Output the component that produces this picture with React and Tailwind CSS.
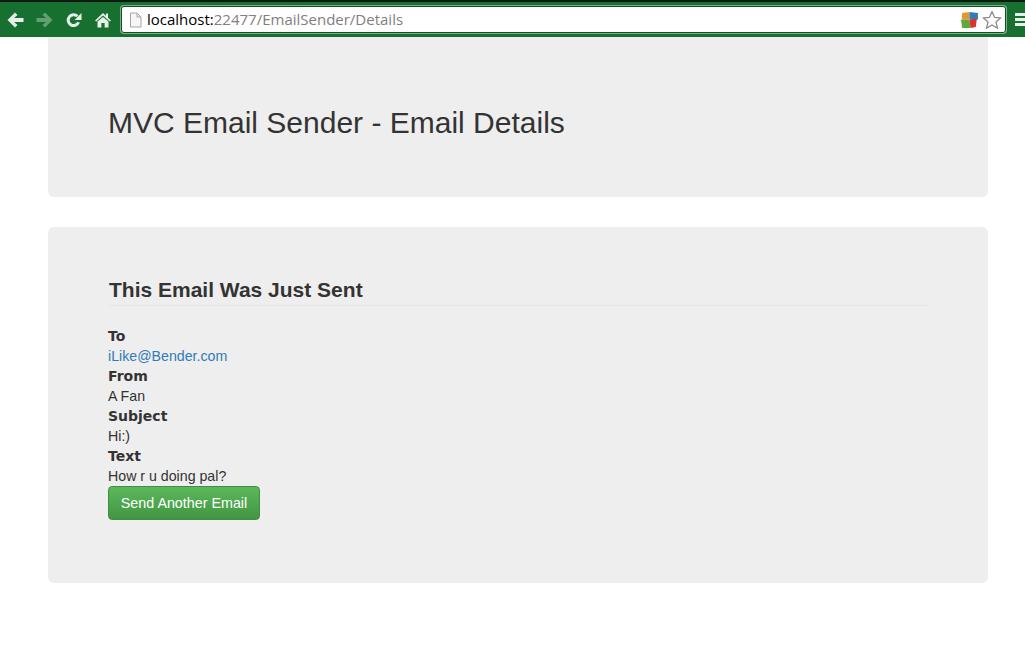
import React from 'react';

function BackArrow({ color, flip }) {
  return (
    <svg width="17" height="16" viewBox="0 0 17 16" className={flip ? 'shrink-0 -scale-x-100' : 'shrink-0'}>
      <path d="M8 0.5 L10.5 3 L7 6 H16.5 V10 H7 L10.5 13 L8 15.5 L0.5 8 Z" fill={color} />
    </svg>
  );
}

function ReloadIcon() {
  return (
    <svg width="16" height="16" viewBox="0 0 16 16" className="shrink-0">
      <path d="M12.6 10.2 A5.4 5.4 0 1 1 11.4 4.3" fill="none" stroke="#e6efe8" strokeWidth="3" />
      <path d="M15.5 1 V8 H8.5 Z" fill="#e6efe8" />
    </svg>
  );
}

function HomeIcon() {
  return (
    <svg width="16" height="16" viewBox="0 0 16 16" className="shrink-0">
      <path d="M8 1 L11 3.8 V1.5 H13 V5.7 L16 8.5 L14.8 9.5 L8 3.6 L1.2 9.5 L0 8.5 Z" fill="#e6efe8" />
      <path d="M8 5 L13.5 9.6 V15.5 H9.6 V11 H6.4 V15.5 H2.5 V9.6 Z" fill="#e6efe8" />
    </svg>
  );
}

function AvgLogo() {
  return (
    <svg width="18" height="18" viewBox="0 0 17 17" className="shrink-0">
      <path d="M1 2 L8 1 L8 8 L1 8 Z" fill="#e8952a" />
      <path d="M8 1 L16 2 L16 8 L8 8 Z" fill="#2b7fc0" />
      <path d="M0 8 L8 8 L9 16 L1 16 Z" fill="#62a83e" />
      <path d="M8 8 L15 7 L14 15 L9 16 Z" fill="#d8352a" />
    </svg>
  );
}

function StarIcon() {
  return (
    <svg width="20" height="20" viewBox="0 0 20 20" className="shrink-0">
      <path d="M10 1.5 L12.5 7.3 L18.8 7.8 L14 12 L15.5 18.3 L10 15 L4.5 18.3 L6 12 L1.2 7.8 L7.5 7.3 Z" fill="#fff" stroke="#8a8a8a" strokeWidth="1.3" strokeLinejoin="round" />
    </svg>
  );
}

function BrowserBar() {
  return (
    <div className="h-[37px] bg-[#17702f] border-t-[2px] border-[#0c1a10] flex items-center overflow-hidden">
      <div className="w-[120px] pl-[7px] flex items-center shrink-0">
        <BackArrow color="#e6efe8" />
        <div className="ml-[12px]"><BackArrow color="#5fa173" flip /></div>
        <div className="ml-[13px]"><ReloadIcon /></div>
        <div className="ml-[13px]"><HomeIcon /></div>
      </div>
      <div className="w-[885px] h-[27px] ml-[1px] bg-white border border-[#0f4f22] ring-1 ring-[#7fae8c] rounded-[3px] flex items-center pl-[7px] pr-[3px] shrink-0">
        <svg width="13" height="16" viewBox="0 0 13 16" className="shrink-0">
          <path d="M1.5 1 H8 L12 5 V15 H1.5 Z" fill="#f6f6f6" stroke="#a5a5a5" />
          <path d="M8 1 V5 H12" fill="none" stroke="#a5a5a5" />
        </svg>
        <div className="ml-[5px] grow text-[15px] font-['Open_Sans',sans-serif] text-[#808080] leading-none whitespace-nowrap">
          <span className="text-black">localhost:</span>22477/EmailSender/Details
        </div>
        <AvgLogo />
        <div className="ml-[3px]"><StarIcon /></div>
      </div>
      <div className="ml-[9px] w-[12px] flex flex-col gap-[2px] shrink-0">
        <div className="h-[3px] bg-[#e6efe8]" />
        <div className="h-[3px] bg-[#e6efe8]" />
        <div className="h-[3px] bg-[#e6efe8]" />
      </div>
    </div>
  );
}

export default function App() {
  return (
    <div className="w-[1025px] h-[671px] bg-white overflow-hidden font-['Liberation_Sans',Arial,sans-serif] text-[14.2px] leading-[20px] text-[#333]">
      <BrowserBar />
      <div className="w-[940px] ml-[48px]">
        <div className="h-[160px] bg-[#eeeeee] rounded-b-[6px] px-[60px] pt-[66px]">
          <h1 className="text-[30px] leading-[39px] font-normal">MVC Email Sender - Email Details</h1>
        </div>
        <div className="mt-[30px] h-[356px] bg-[#eeeeee] rounded-[6px] px-[60px] pt-[50px]">
          <h3 className="ml-px text-[21px] leading-[26px] font-bold border-b border-[#e5e5e5] pb-[2px]">This Email Was Just Sent</h3>
          <div className="mt-[20px]">
            <div className="font-bold font-['DejaVu_Sans',sans-serif] text-[14px]">To</div>
            <div><a href="#" className="text-[#337ab7]">iLike@Bender.com</a></div>
            <div className="font-bold font-['DejaVu_Sans',sans-serif] text-[14px]">From</div>
            <div>A Fan</div>
            <div className="font-bold font-['DejaVu_Sans',sans-serif] text-[14px]">Subject</div>
            <div>Hi:)</div>
            <div className="font-bold font-['DejaVu_Sans',sans-serif] text-[14px]">Text</div>
            <div>How r u doing pal?</div>
          </div>
          <button className="block w-[152px] h-[34px] rounded-[4px] border border-[#3e8f3e] bg-gradient-to-b from-[#5cb85c] to-[#419641] text-white text-[14.3px]">Send Another Email</button>
        </div>
      </div>
    </div>
  );
}
